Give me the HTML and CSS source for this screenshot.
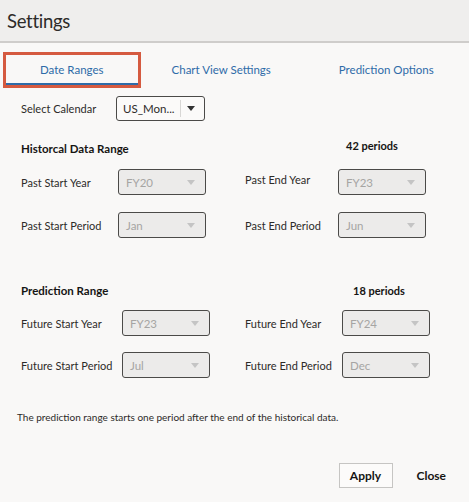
FILE: index.html
```html
<!DOCTYPE html>
<html>
<head>
<meta charset="utf-8">
<link rel="stylesheet" href="styles.css">
</head>
<body>
<div class="dialog">
  <div class="header"><h1 class="title">Settings</h1></div>
  <div class="tabs">
    <div class="tab active">Date Ranges</div>
    <div class="tab">Chart View Settings</div>
    <div class="tab">Prediction Options</div>
  </div>
  <div class="calendar-row">
    <span class="label">Select Calendar</span>
    <div class="select enabled">
      <span class="value">US_Mon...</span>
      <span class="divider"></span>
      <svg class="arrow" width="8" height="5" viewBox="0 0 8 5"><path d="M0 0h8L4 5z" fill="#333"/></svg>
    </div>
  </div>

  <div class="range-head hist-head">
    <div class="heading">Historcal Data Range</div>
    <div class="periods">42 periods</div>
  </div>
  <div class="range hist">
    <span class="label">Past Start Year</span>
    <div class="select"><span class="value">FY20</span><svg class="arrow" width="8" height="5" viewBox="0 0 8 5"><path d="M0 0h8L4 5z" fill="#c4c4c4"/></svg></div>
    <span class="label label-r up">Past End Year</span>
    <div class="select"><span class="value">FY23</span><svg class="arrow" width="8" height="5" viewBox="0 0 8 5"><path d="M0 0h8L4 5z" fill="#c4c4c4"/></svg></div>

    <span class="label">Past Start Period</span>
    <div class="select"><span class="value">Jan</span><svg class="arrow" width="8" height="5" viewBox="0 0 8 5"><path d="M0 0h8L4 5z" fill="#c4c4c4"/></svg></div>
    <span class="label label-r">Past End Period</span>
    <div class="select"><span class="value">Jun</span><svg class="arrow" width="8" height="5" viewBox="0 0 8 5"><path d="M0 0h8L4 5z" fill="#c4c4c4"/></svg></div>
  </div>

  <div class="range-head pred-head">
    <div class="heading">Prediction Range</div>
    <div class="periods">18 periods</div>
  </div>
  <div class="range pred">
    <span class="label">Future Start Year</span>
    <div class="select"><span class="value">FY23</span><svg class="arrow" width="8" height="5" viewBox="0 0 8 5"><path d="M0 0h8L4 5z" fill="#c4c4c4"/></svg></div>
    <span class="label label-r">Future End Year</span>
    <div class="select"><span class="value">FY24</span><svg class="arrow" width="8" height="5" viewBox="0 0 8 5"><path d="M0 0h8L4 5z" fill="#c4c4c4"/></svg></div>

    <span class="label">Future Start Period</span>
    <div class="select"><span class="value">Jul</span><svg class="arrow" width="8" height="5" viewBox="0 0 8 5"><path d="M0 0h8L4 5z" fill="#c4c4c4"/></svg></div>
    <span class="label label-r">Future End Period</span>
    <div class="select"><span class="value">Dec</span><svg class="arrow" width="8" height="5" viewBox="0 0 8 5"><path d="M0 0h8L4 5z" fill="#c4c4c4"/></svg></div>
  </div>

  <p class="note">The prediction range starts one period after the end of the historical data.</p>

  <div class="footer">
    <button class="btn apply">Apply</button>
    <button class="btn close">Close</button>
  </div>
</div>
</body>
</html>
```

FILE: styles.css
```css
* { box-sizing: border-box; }
html, body { margin: 0; padding: 0; }
body {
  background: #f9f8f7;
  font-family: Lato, "Noto Sans", sans-serif;
  color: #161513;
  width: 469px;
  height: 502px;
  overflow: hidden;
}
.header {
  height: 43px;
  background: #efeeed;
  border-bottom: 2px solid #cfcdcb;
  padding-left: 7px;
  display: flex;
  align-items: center;
}
.title {
  margin: 0;
  font-size: 18.5px;
  font-weight: 400;
  letter-spacing: -0.3px;
  color: #2d2b29;
}
.tabs {
  display: flex;
  margin-top: 9px;
  padding-left: 6px;
  height: 36px;
}
.tab {
  font-size: 11.5px;
  color: #2e6ba8;
  padding: 0 34px;
  height: 30px;
  display: flex;
  align-items: center;
  margin-top: 2px;
  white-space: nowrap;
  flex-shrink: 0;
}
.tab.active {
  margin-top: 3px;
  border-bottom: 2px solid #2e6ba8;
  outline: 3px solid #d55a40;
}
.label {
  font-size: 11px;
  color: #2d2b29;
  white-space: nowrap;
}
.calendar-row {
  display: flex;
  align-items: center;
  padding-left: 21px;
  margin-top: 8px;
}
.calendar-row .label { width: 95px; }
.select {
  width: 88px;
  height: 26px;
  border: 1px solid #4b4a48;
  border-radius: 3px;
  background: #ecebea;
  display: flex;
  align-items: center;
  padding: 0 10px 0 7px;
  font-size: 11.5px;
  color: #a6a5a3;
}
.select .value { flex: 1; }
.select.enabled {
  width: 89px;
  height: 25px;
  background: #fbfaf9;
  color: #2d2b29;
  padding: 0 9px 0 6px;
}
.select .divider {
  width: 1px;
  height: 17px;
  background: #d8d7d5;
  margin-right: 6px;
}
.range-head {
  display: grid;
  grid-template-columns: 224px 93px 88px;
  padding-left: 21px;
  height: 14px;
  align-items: center;
}
.hist-head { margin-top: 21px; }
.pred-head {
  margin-top: 46px;
  grid-template-columns: 224px 97px 88px;
}
.heading {
  font-size: 11.5px;
  font-weight: 700;
  line-height: 14px;
}
.periods {
  grid-column: 3;
  font-size: 11px;
  font-weight: 700;
  line-height: 14px;
  padding-left: 8px;
}
.hist-head .periods { margin-top: -6px; }
.pred-head .periods { padding-left: 11px; }
.range {
  display: grid;
  grid-template-columns: 97px 88px 39px 93px 88px;
  grid-auto-rows: 26px;
  align-items: center;
  padding-left: 21px;
}
.hist {
  margin-top: 13px;
  row-gap: 17px;
}
.pred {
  margin-top: 12px;
  grid-template-columns: 101px 88px 35px 97px 88px;
  row-gap: 16px;
}
.label-r { grid-column: 4; }
.up { margin-top: -5px; }
.note {
  font-size: 10px;
  line-height: 14px;
  margin: 32px 0 0 17px;
  color: #2d2b29;
}
.footer {
  display: flex;
  justify-content: flex-end;
  align-items: center;
  margin-top: 39px;
  padding-right: 23px;
  gap: 24px;
}
.btn {
  font-family: inherit;
  font-size: 12px;
  font-weight: 700;
  color: #161513;
  background: transparent;
  border: none;
  padding: 0;
}
.apply {
  width: 54px;
  height: 25px;
  border: 1px solid #c6c5c3;
  background: #fcfbfa;
}
```
